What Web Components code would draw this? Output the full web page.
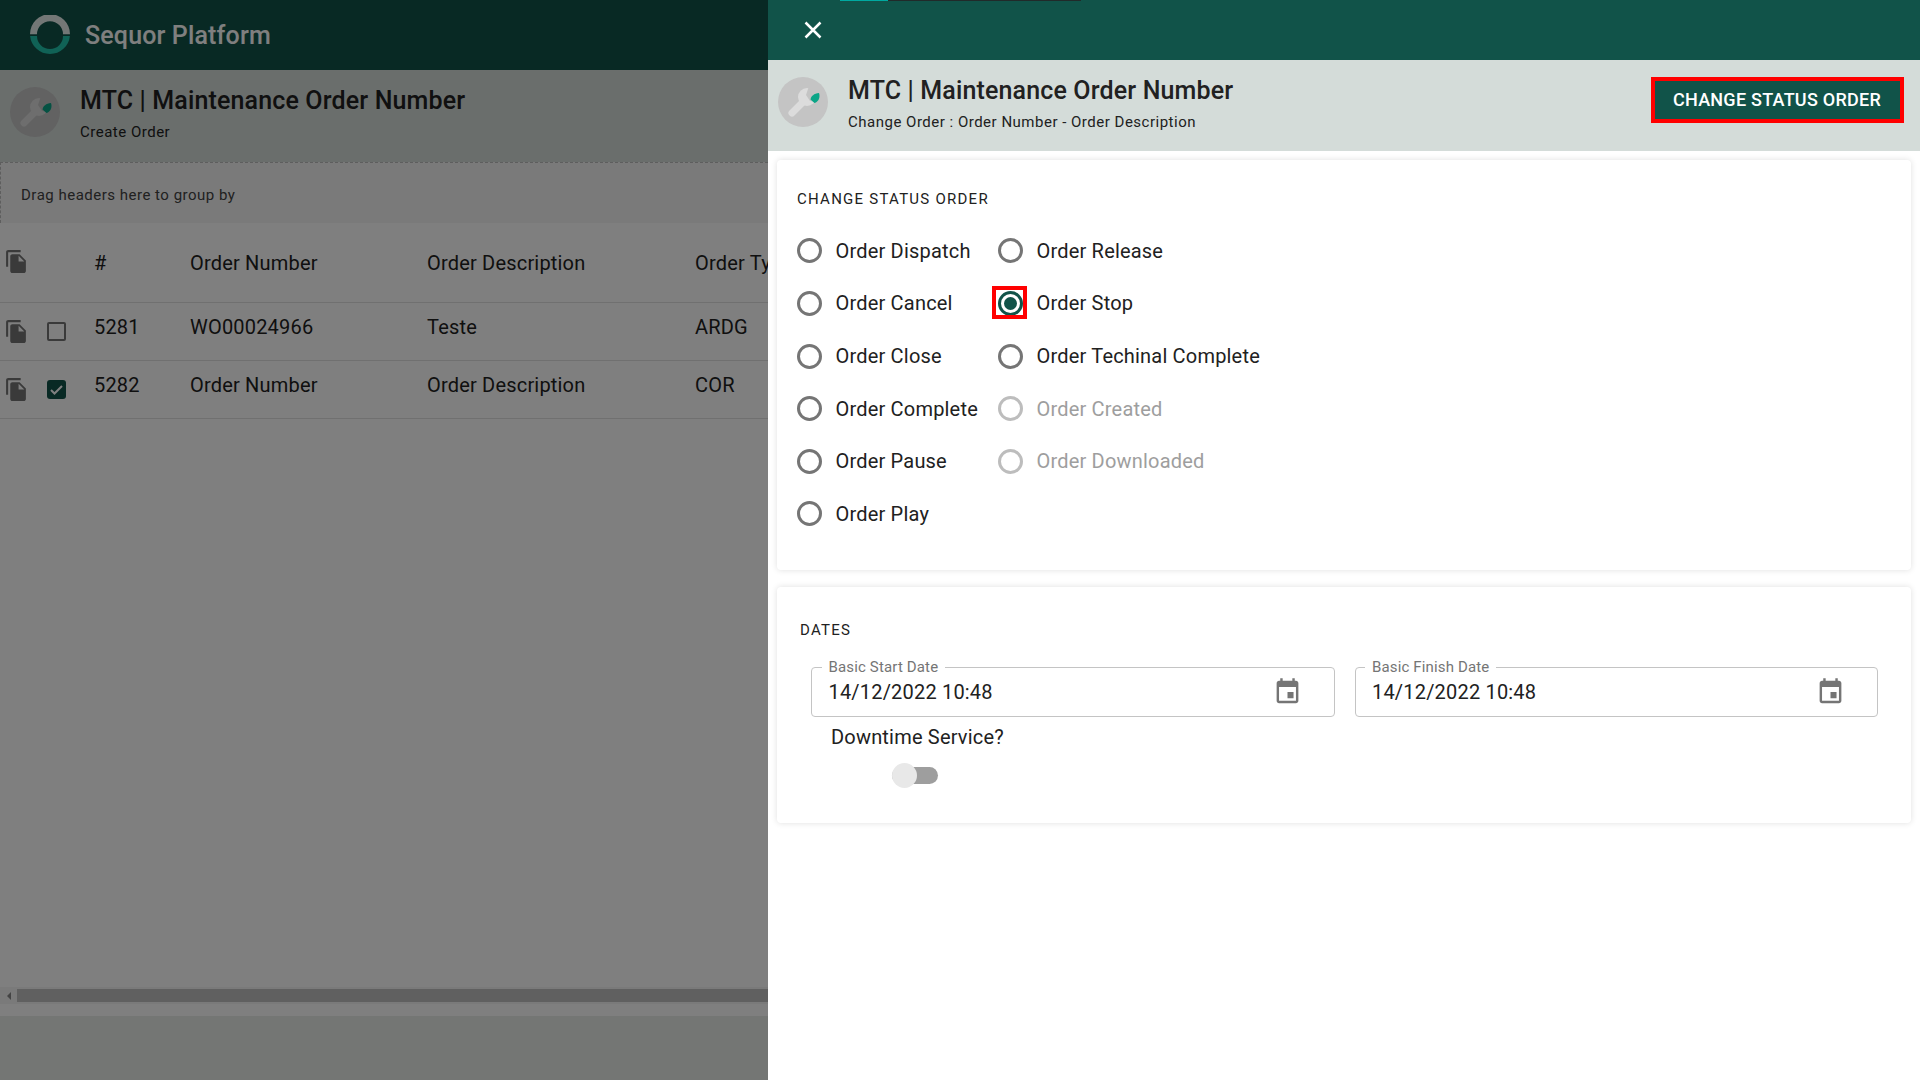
<!DOCTYPE html>
<html lang="en">
<head>
<meta charset="utf-8">
<title>Sequor Platform</title>
<style>
  html, body { margin: 0; height: 100%; background: #fff; }
  body { font-family: Roboto, "Liberation Sans", sans-serif; color: #212121; overflow: hidden; }
</style>
</head>
<body>
<app-shell>
  <order-list slot="page"></order-list>
  <status-drawer slot="drawer">
    <form-card heading="Change Status Order" style="--card-height:410px;--card-top:29px;--card-x:20px;">
      <div style="display:grid;grid-template-columns:201px auto;grid-auto-rows:52.6px;margin-top:15.6px;justify-content:start;">
        <radio-option>Order Dispatch</radio-option>
        <radio-option>Order Release</radio-option>
        <radio-option>Order Cancel</radio-option>
        <radio-option checked highlight>Order Stop</radio-option>
        <radio-option>Order Close</radio-option>
        <radio-option>Order Techinal Complete</radio-option>
        <radio-option>Order Complete</radio-option>
        <radio-option disabled>Order Created</radio-option>
        <radio-option>Order Pause</radio-option>
        <radio-option disabled>Order Downloaded</radio-option>
        <radio-option>Order Play</radio-option>
      </div>
    </form-card>
    <form-card heading="Dates" style="--card-height:236px;--card-top:33px;--card-x:23px;margin-top:17px;">
      <div style="display:flex;gap:20px;margin:27px 33px 0 11px;">
        <date-field label="Basic Start Date" value="14/12/2022 10:48"></date-field>
        <date-field label="Basic Finish Date" value="14/12/2022 10:48"></date-field>
      </div>
      <toggle-field>Downtime Service?</toggle-field>
    </form-card>
  </status-drawer>
</app-shell>

<script>
const TEAL = '#115349';

/** Base class, every element just clones its template in an open shadow root */
class BaseElement extends HTMLElement {
  connectedCallback() {
    if (this.shadowRoot) return;
    this.attachShadow({ mode: 'open' });
    const template = document.createElement('template');
    template.innerHTML = this.template;
    this.shadowRoot.appendChild(template.content.cloneNode(true));
  }
}

class AppShell extends BaseElement {
  get template() {
    return `
      <style>
        :host { display: flex; width: 1920px; height: 1080px; overflow: hidden; }
        .page { position: relative; width: 768px; height: 100%; overflow: hidden; flex: none; }
        .backdrop { position: absolute; inset: 0; background: rgba(0,0,0,.5); }
        .drawer { flex: 1; min-width: 0; }
      </style>
      <div class="page"><slot name="page"></slot><div class="backdrop"></div></div>
      <div class="drawer"><slot name="drawer"></slot></div>
    `;
  }
}

class PageHeader extends BaseElement {
  get template() {
    return `
      <style>
        :host { display: flex; align-items: flex-start; background: #d4dcd9; box-sizing: border-box; height: var(--header-height, 91px); padding: 17px 16px 0 10px; gap: 20px; }
        svg { flex: none; display: block; }
        .text { flex: 1; min-width: 0; white-space: nowrap; }
        h1 { margin: 0; font: 500 25px/28px Roboto, sans-serif; letter-spacing: .15px; color: #212121; }
        p { margin: 7px 0 0; font: 400 15px/20px Roboto, sans-serif; letter-spacing: .5px; color: #212121; }
      </style>
      <svg width="50" height="50" viewBox="0 0 50 50">
        <circle cx="25" cy="25" r="25" fill="#c4c4c4"/>
        <path d="M14 36 L27 23" stroke="#dcdcdc" stroke-width="7" stroke-linecap="round"/>
        <circle cx="29" cy="20" r="9" fill="#dcdcdc"/>
        <path d="M31 9 L43 9 L43 26 L32 24 L28 18Z" fill="#c4c4c4"/>
        <path d="M41 16 C36 16.500 33 19 32.500 22.500 L36.500 26 C40.500 25 42.500 20 41 16Z" fill="#0ba587"/>
      </svg>
      <div class="text">
        <h1>${this.getAttribute('title-text')}</h1>
        <p>${this.getAttribute('subtitle')}</p>
      </div>
      <slot></slot>
    `;
  }
}

class OrderList extends BaseElement {
  get copyIcon() {
    return `<svg class="copy" width="25" height="25" viewBox="0 0 24 24" fill="#757575"><path d="M16 1H4c-1.100 0-2 .9-2 2v14h2V3h12V1zm-1 4l6 6v10c0 1.100-.9 2-2 2H7.990C6.890 23 6 22.100 6 21l.01-14c0-1.100.89-2 1.990-2h7zm-1 7h5.500L14 6.500V12z"/></svg>`;
  }

  row(id, number, description, type, checked) {
    return `
      <div class="row body">
        <span class="cell icon">${this.copyIcon}</span>
        <span class="cell icon"><span class="check ${checked ? 'on' : ''}">${checked ? '<svg width="19" height="19" viewBox="0 0 19 19"><path d="M4 10l3.500 3.500L15 6" fill="none" stroke="#fff" stroke-width="2"/></svg>' : ''}</span></span>
        <span class="cell">${id}</span>
        <span class="cell">${number}</span>
        <span class="cell">${description}</span>
        <span class="cell">${type}</span>
      </div>
    `;
  }

  get template() {
    return `
      <style>
        :host { display: flex; flex-direction: column; height: 1080px; background: #fff; }
        .nav { height: 70px; flex: none; background: ${TEAL}; display: flex; align-items: center; padding-left: 30px; gap: 15px; color: #fff; font: 500 25px/28px Roboto, sans-serif; letter-spacing: .15px; }
        .nav svg { display: block; }
        .nav span { padding-top: 1px; }
        page-header { flex: none; --header-height: 92px; }
        .group { height: 61px; flex: none; box-sizing: border-box; border-top: 1px dashed #bdbdbd; border-left: 1px dashed #bdbdbd; background: #f5f5f5; padding: 4px 0 0 20px; display: flex; align-items: center; font: 400 15px/20px Roboto, sans-serif; letter-spacing: .5px; color: #424242; }
        .table { flex: 1; min-height: 0; overflow: hidden; }
        .row { display: grid; grid-template-columns: 47px 47px 96px 237px 268px 100px; white-space: nowrap; border-bottom: 1px solid #e0e0e0; box-sizing: border-box; font: 400 20px/24px Roboto, sans-serif; letter-spacing: .19px; color: #212121; }
        .row.head { height: 80px; align-items: center; }
        .row.body { height: 58px; padding-bottom: 10px; align-items: center; }
        .icon { display: flex; align-items: center; height: 24px; }
        .body .icon { transform: translateY(5px); }
        .head .icon { transform: translateY(-1px); }
        .copy { margin-left: 4px; display: block; }
        .check { width: 19px; height: 19px; box-sizing: border-box; border: 2px solid #757575; border-radius: 2px; display: block; }
        .check.on { border: 0; background: ${TEAL}; border-radius: 3px; }
        .check svg { display: block; }
        .scroll { height: 17px; flex: none; margin-bottom: 12px; background: #f5f5f5; display: flex; align-items: center; }
        .scroll .arrow { width: 17px; height: 13px; flex: none; display: flex; align-items: center; justify-content: center; }
        .scroll .thumb { flex: 1; height: 13px; background: #c0c0c0; }
        .footer { height: 64px; flex: none; background: #e8ece9; }
      </style>
      <div class="nav">
        <svg width="40" height="40" viewBox="0 0 40 40">
          <path d="M0 19.200 A20 20 0 0 1 40 19.200 L33 19.200 A13 13 0 0 0 7 19.200Z" fill="#fff" opacity=".9"/>
          <path d="M0.100 21 A20 20 0 0 0 39.900 21 L33 21 A13 13 0 0 1 7 21Z" fill="#20c4ac"/>
        </svg>
        <span>Sequor Platform</span>
      </div>
      <page-header title-text="MTC | Maintenance Order Number" subtitle="Create Order"></page-header>
      <div class="group">Drag headers here to group by</div>
      <div class="table">
        <div class="row head">
          <span class="cell icon">${this.copyIcon}</span>
          <span class="cell"></span>
          <span class="cell">#</span>
          <span class="cell">Order Number</span>
          <span class="cell">Order Description</span>
          <span class="cell">Order Type</span>
        </div>
        ${this.row('5281', 'WO00024966', 'Teste', 'ARDG', false)}
        ${this.row('5282', 'Order Number', 'Order Description', 'COR', true)}
      </div>
      <div class="scroll">
        <span class="arrow"><svg width="6" height="10" viewBox="0 0 6 10"><path d="M5 1v8L1 5z" fill="#888"/></svg></span>
        <span class="thumb"></span>
      </div>
      <div class="footer"></div>
    `;
  }
}

class StatusDrawer extends BaseElement {
  get template() {
    return `
      <style>
        :host { display: flex; flex-direction: column; height: 1080px; background: #fff; }
        .bar { height: 60px; flex: none; background: ${TEAL}; position: relative; display: flex; align-items: center; padding-left: 33px; }
        .tabs { position: absolute; left: 72px; top: 0; display: flex; height: 1px; }
        .tabs i { display: block; height: 1px; }
        .close { display: block; }
        button { height: 46px; width: 253px; box-sizing: border-box; border: 4px solid #ff0000; background: ${TEAL}; color: #fff; font: 500 18px/24px Roboto, sans-serif; padding: 0 1px 0 0; letter-spacing: .25px; }
        .cards { padding: 9px 9px 0; }
      </style>
      <div class="bar">
        <div class="tabs"><i style="width:48px;background:#00a9a0"></i><i style="width:193px;background:#212a2a"></i></div>
        <svg class="close" width="24" height="24" viewBox="0 0 24 24"><path d="M4.500 4.500l15 15M19.500 4.500l-15 15" stroke="#fff" stroke-width="2.500" fill="none"/></svg>
      </div>
      <page-header title-text="MTC | Maintenance Order Number" subtitle="Change Order : Order Number - Order Description">
        <button>CHANGE STATUS ORDER</button>
      </page-header>
      <div class="cards"><slot></slot></div>
    `;
  }
}

class FormCard extends BaseElement {
  get template() {
    return `
      <style>
        :host { display: block; box-sizing: border-box; height: var(--card-height); padding: var(--card-top) 0 0 var(--card-x); background: #fff; border-radius: 4px; box-shadow: 0 0 6px rgba(0,0,0,.13); }
        h2 { margin: 0; font: 400 15px/20px Roboto, sans-serif; letter-spacing: 1.25px; text-transform: uppercase; color: #212121; }
      </style>
      <h2>${this.getAttribute('heading')}</h2>
      <slot></slot>
    `;
  }
}

class RadioOption extends BaseElement {
  get template() {
    return `
      <style>
        :host { display: flex; align-items: center; gap: 14px; font: 400 20px/24px Roboto, sans-serif; letter-spacing: .19px; color: #212121; white-space: nowrap; }
        :host([disabled]) { color: #9e9e9e; }
        .ring { position: relative; margin-left: -.5px; width: 25px; height: 25px; box-sizing: border-box; border: 3px solid #757575; border-radius: 50%; flex: none; display: flex; align-items: center; justify-content: center; }
        :host([disabled]) .ring { border-color: #bdbdbd; }
        :host([checked]) .ring { border-color: ${TEAL}; }
        :host([checked]) .ring::before { content: ""; width: 13px; height: 13px; border-radius: 50%; background: ${TEAL}; }
        :host([highlight]) .ring::after { content: ""; position: absolute; left: -8.500px; top: -7.500px; width: 35px; height: 33px; box-sizing: border-box; border: 4px solid #ff0000; }
      </style>
      <span class="ring"></span>
      <slot></slot>
    `;
  }
}

class DateField extends BaseElement {
  get template() {
    return `
      <style>
        :host { position: relative; display: flex; align-items: center; flex: 1; min-width: 0; height: 50px; box-sizing: border-box; border: 1px solid #c4c4c4; border-radius: 4px; padding: 0 32px 0 16.500px; }
        .label { position: absolute; left: 9.500px; top: -11px; background: #fff; padding: 0 7px; font: 400 15px/20px Roboto, sans-serif; letter-spacing: .15px; color: #757575; white-space: nowrap; }
        .value { flex: 1; font: 400 20px/24px Roboto, sans-serif; letter-spacing: .19px; color: #212121; }
        svg { display: block; flex: none; }
      </style>
      <span class="label">${this.getAttribute('label')}</span>
      <span class="value">${this.getAttribute('value')}</span>
      <svg width="29" height="30" viewBox="0 0 24 24" preserveAspectRatio="none" fill="#757575"><path d="M17 12h-5v5h5v-5zM16 1v2H8V1H6v2H5c-1.110 0-1.990.9-1.990 2L3 19c0 1.100.89 2 2 2h14c1.100 0 2-.9 2-2V5c0-1.100-.9-2-2-2h-1V1h-2zm3 18H5V8h14v11z"/></svg>
    `;
  }
}

class ToggleField extends BaseElement {
  get template() {
    return `
      <style>
        :host { display: block; margin: 8px 0 0 31px; }
        .label { display: block; font: 400 20px/24px Roboto, sans-serif; letter-spacing: .19px; color: #212121; }
        .toggle { position: relative; display: block; width: 46px; height: 17px; margin: 18px 0 0 61px; background: #9e9e9e; border-radius: 9px; }
        .toggle::before { content: ""; position: absolute; left: 0; top: -4px; width: 25px; height: 25px; border-radius: 50%; background: #e8e8e8; }
      </style>
      <span class="label"><slot></slot></span>
      <span class="toggle"></span>
    `;
  }
}

window.customElements.define('page-header', PageHeader);
window.customElements.define('app-shell', AppShell);
window.customElements.define('order-list', OrderList);
window.customElements.define('status-drawer', StatusDrawer);
window.customElements.define('form-card', FormCard);
window.customElements.define('radio-option', RadioOption);
window.customElements.define('date-field', DateField);
window.customElements.define('toggle-field', ToggleField);
</script>
</body>
</html>
